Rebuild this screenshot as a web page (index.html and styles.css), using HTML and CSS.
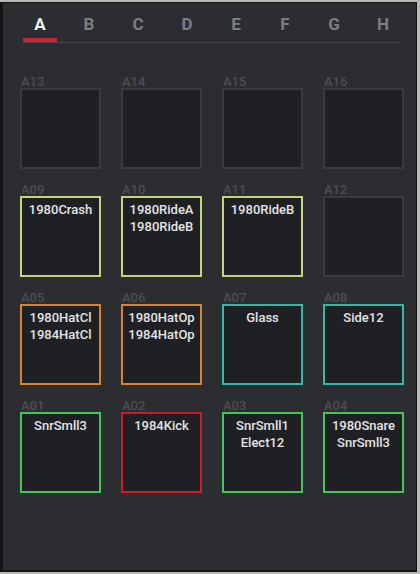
FILE: index.html
```html
<!DOCTYPE html>
<html>
<head>
<meta charset="utf-8">
<link rel="stylesheet" href="styles.css">
</head>
<body>
<div class="panel">
  <div class="tabs">
    <div class="tab active">A</div>
    <div class="tab">B</div>
    <div class="tab">C</div>
    <div class="tab">D</div>
    <div class="tab">E</div>
    <div class="tab">F</div>
    <div class="tab">G</div>
    <div class="tab">H</div>
  </div>
  <div class="grid">
    <div class="cell"><div class="label">A13</div><div class="pad"></div></div>
    <div class="cell"><div class="label">A14</div><div class="pad"></div></div>
    <div class="cell"><div class="label">A15</div><div class="pad"></div></div>
    <div class="cell"><div class="label">A16</div><div class="pad"></div></div>

    <div class="cell"><div class="label">A09</div><div class="pad lime">1980Crash</div></div>
    <div class="cell"><div class="label">A10</div><div class="pad lime">1980RideA<br>1980RideB</div></div>
    <div class="cell"><div class="label">A11</div><div class="pad lime">1980RideB</div></div>
    <div class="cell"><div class="label">A12</div><div class="pad"></div></div>

    <div class="cell"><div class="label">A05</div><div class="pad orange">1980HatCl<br>1984HatCl</div></div>
    <div class="cell"><div class="label">A06</div><div class="pad orange">1980HatOp<br>1984HatOp</div></div>
    <div class="cell"><div class="label">A07</div><div class="pad teal">Glass</div></div>
    <div class="cell"><div class="label">A08</div><div class="pad teal">Side12</div></div>

    <div class="cell"><div class="label">A01</div><div class="pad green">SnrSmll3</div></div>
    <div class="cell"><div class="label">A02</div><div class="pad red">1984Kick</div></div>
    <div class="cell"><div class="label">A03</div><div class="pad green">SnrSmll1<br>Elect12</div></div>
    <div class="cell"><div class="label">A04</div><div class="pad green">1980Snare<br>SnrSmll3</div></div>
  </div>
</div>
</body>
</html>
```
FILE: styles.css
```css
html, body {
  margin: 0;
  padding: 0;
}
body {
  background: #b9b9b9;
  width: 420px;
  height: 574px;
  overflow: hidden;
  font-family: Roboto, "Liberation Sans", sans-serif;
}
.panel {
  margin-top: 2px;
  width: 413px;
  height: 556px;
  background: #2c2d31;
  border-top: 1px solid #141414;
  border-left: 3px solid #141414;
  border-right: 1px solid #141414;
  border-bottom: 2px solid #141414;
  padding-top: 11px;
  box-sizing: content-box;
}
.tabs {
  margin-left: 20px;
  width: 377px;
  display: grid;
  grid-template-columns: repeat(8, 34px);
  column-gap: 15px;
  border-bottom: 1px solid #45464a;
}
.tab {
  font-size: 17px;
  font-weight: 700;
  line-height: 20px;
  text-align: center;
  color: #7c7d82;
  padding-bottom: 4px;
  border-bottom: 4px solid transparent;
}
.tab.active {
  color: #f2f2f2;
  border-bottom-color: #cf2038;
}
.grid {
  margin-top: 32px;
  margin-left: 17px;
  display: grid;
  grid-template-columns: repeat(4, 81px);
  column-gap: 20px;
  row-gap: 14px;
}
.label {
  height: 13px;
  font-size: 13px;
  line-height: 14px;
  font-weight: 500;
  color: #4c4d51;
  padding-left: 1px;
}
.pad {
  box-sizing: border-box;
  height: 81px;
  background: #1f2024;
  border: 2px solid #3a3b3f;
  padding-top: 3px;
  text-align: center;
  font-size: 13px;
  line-height: 17px;
  font-weight: 500;
  color: #e4e4e4;
}
.pad.lime { border-color: #c2d67f; }
.pad.orange { border-color: #d3862f; }
.pad.teal { border-color: #36b9aa; }
.pad.green { border-color: #48c25a; }
.pad.red { border-color: #c41f2a; }
```
